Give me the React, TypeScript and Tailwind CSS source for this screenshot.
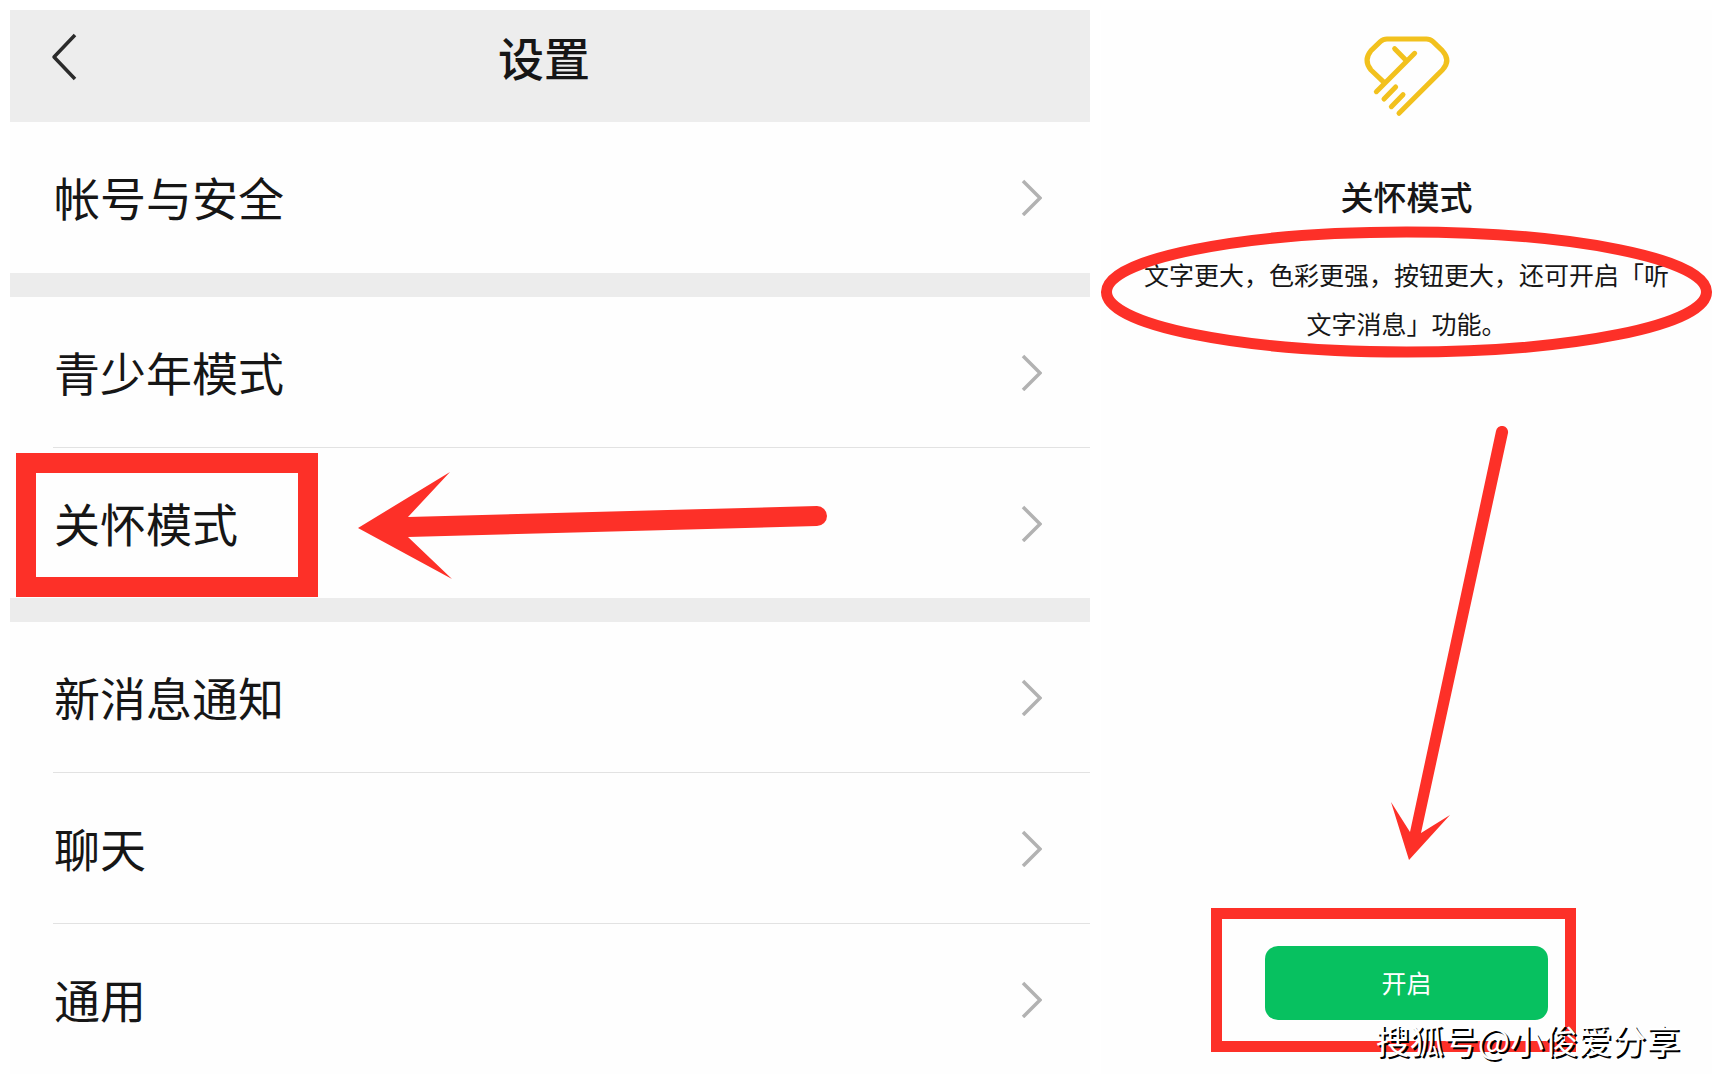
import React from "react";
import clsx from "clsx";

const groups = [
    ["帐号与安全"],
    ["青少年模式", "关怀模式"],
    ["新消息通知", "聊天", "通用"],
];

const Chevron = () => (
    <svg width="22" height="38" viewBox="0 0 22 38" fill="none" stroke="#b2b2b2" strokeWidth="3.5" aria-hidden="true">
        <path d="M3 3 L20 20 L3 37" />
    </svg>
);

const BackIcon = () => (
    <svg width="28" height="48" viewBox="0 0 28 48" fill="none" stroke="#2b2b2b" strokeWidth="3.5" aria-hidden="true">
        <path d="M25 2 L4 24 L25 46" strokeLinejoin="round" />
    </svg>
);

const HeartHands = () => (
    <svg
        width="130"
        height="110"
        viewBox="7 0 390 330"
        fill="none"
        stroke="#f2c11d"
        strokeWidth="15"
        strokeLinecap="round"
        strokeLinejoin="round"
        aria-hidden="true"
    >
        <path d="M133 187 L94 150 Q70 122 94 92 L122 65 Q131 57 142 57 L260 57 Q271 57 280 65 L308 92 Q335 122 308 150 L178 280" />
        <path d="M225 100 L110 215" />
        <path d="M165 86 L196 118" />
        <path d="M168 201 L133 237" />
        <path d="M190 224 L155 260" />
    </svg>
);

const ArrowLeft = () => (
    <svg
        className="absolute left-[348px] top-[22px] pointer-events-none"
        width="472"
        height="112"
        viewBox="358 470 472 112"
        fill="#fd3028"
        aria-hidden="true"
    >
        <path d="M358 528 L450 472 L408 517 L817 506 A10 10 0 0 1 817 526 L408 537 L452 579 Z" />
    </svg>
);

const ArrowDown = () => (
    <svg className="mt-[78px]" width="234" height="436" viewBox="1290 426 234 436" fill="#fd3028" aria-hidden="true">
        <path d="M1409 860 L1391 802 L1410 832 L1496 431 A6 6 0 0 1 1508 433 L1421 833 L1450 815 Z" />
    </svg>
);

const Ellipse = () => (
    <svg className="absolute left-0 -top-6 h-[132px] w-full pointer-events-none" fill="none" stroke="#fd3028" strokeWidth="11" aria-hidden="true">
        <ellipse cx="50%" cy="66" rx="49.1%" ry="60" />
    </svg>
);

const SettingsRow = ({ label, divider }: { label: string; divider: boolean }) => {
    const marked = label === "关怀模式";
    return (
        <li className="relative">
            <a href="#" className="flex h-[150px] items-center justify-between pl-11 pr-12">
                <span className="pb-0.5 text-[46px] leading-[64px]">{label}</span>
                <Chevron />
            </a>
            {divider && <div className="ml-[43px] h-px bg-[#e2e2e2]" />}
            {marked && (
                <>
                    <div className="absolute left-1.5 top-[5px] h-36 w-[302px] border-[20px] border-[#fd3028] pointer-events-none" />
                    <ArrowLeft />
                </>
            )}
        </li>
    );
};

const Settings = () => {
    return (
        <section className="bg-[#fefefe]">
            <header className="relative flex h-28 items-center justify-center bg-[#ededed] pb-5 pr-3">
                <button aria-label="返回" className="absolute left-10 top-[23px] cursor-pointer">
                    <BackIcon />
                </button>
                <h1 className="text-[46px] font-medium leading-[64px]">设置</h1>
            </header>
            {groups.map((items, g) => (
                <ul key={g} className={clsx(g > 0 && "border-t-[24px] border-[#ececec]", g === 0 && "pb-px")}>
                    {items.map((label, i) => (
                        <SettingsRow key={label} label={label} divider={i < items.length - 1} />
                    ))}
                </ul>
            ))}
        </section>
    );
};

const CareMode = () => {
    return (
        <section className="flex flex-col items-center bg-[#fefefe] pt-2.5">
            <HeartHands />
            <h2 className="mt-[42px] text-[33px] font-medium leading-[48px]">关怀模式</h2>
            <div className="relative mt-[30px] flex w-full justify-center">
                <p className="max-w-[540px] text-center text-[25px] leading-[49px]">
                    文字更大，色彩更强，按钮更大，还可开启「听文字消息」功能。
                </p>
                <Ellipse />
            </div>
            <ArrowDown />
            <div className="relative mt-[84px]">
                <button className="block h-[74px] w-[283px] cursor-pointer rounded-[13px] bg-[#07c160] text-[25px] text-white">
                    开启
                </button>
                <div className="absolute -left-[54px] -top-[38px] h-36 w-[365px] border-[11px] border-[#fd3028] pointer-events-none" />
            </div>
        </section>
    );
};

const App = () => {
    return (
        <main
            lang="zh-CN"
            className="relative grid min-h-screen grid-cols-[1080fr_611fr] content-start gap-[11px] bg-white pl-2.5 pr-3 pt-2.5 font-['Noto_Sans_CJK_SC',sans-serif] text-[#161616]"
        >
            <Settings />
            <CareMode />
            <p className="absolute right-11 top-[1016px] text-[34px] leading-[48px] text-white [text-shadow:2px_2px_0_#000]">
                搜狐号@小俊爱分享
            </p>
        </main>
    );
};

export default App;
